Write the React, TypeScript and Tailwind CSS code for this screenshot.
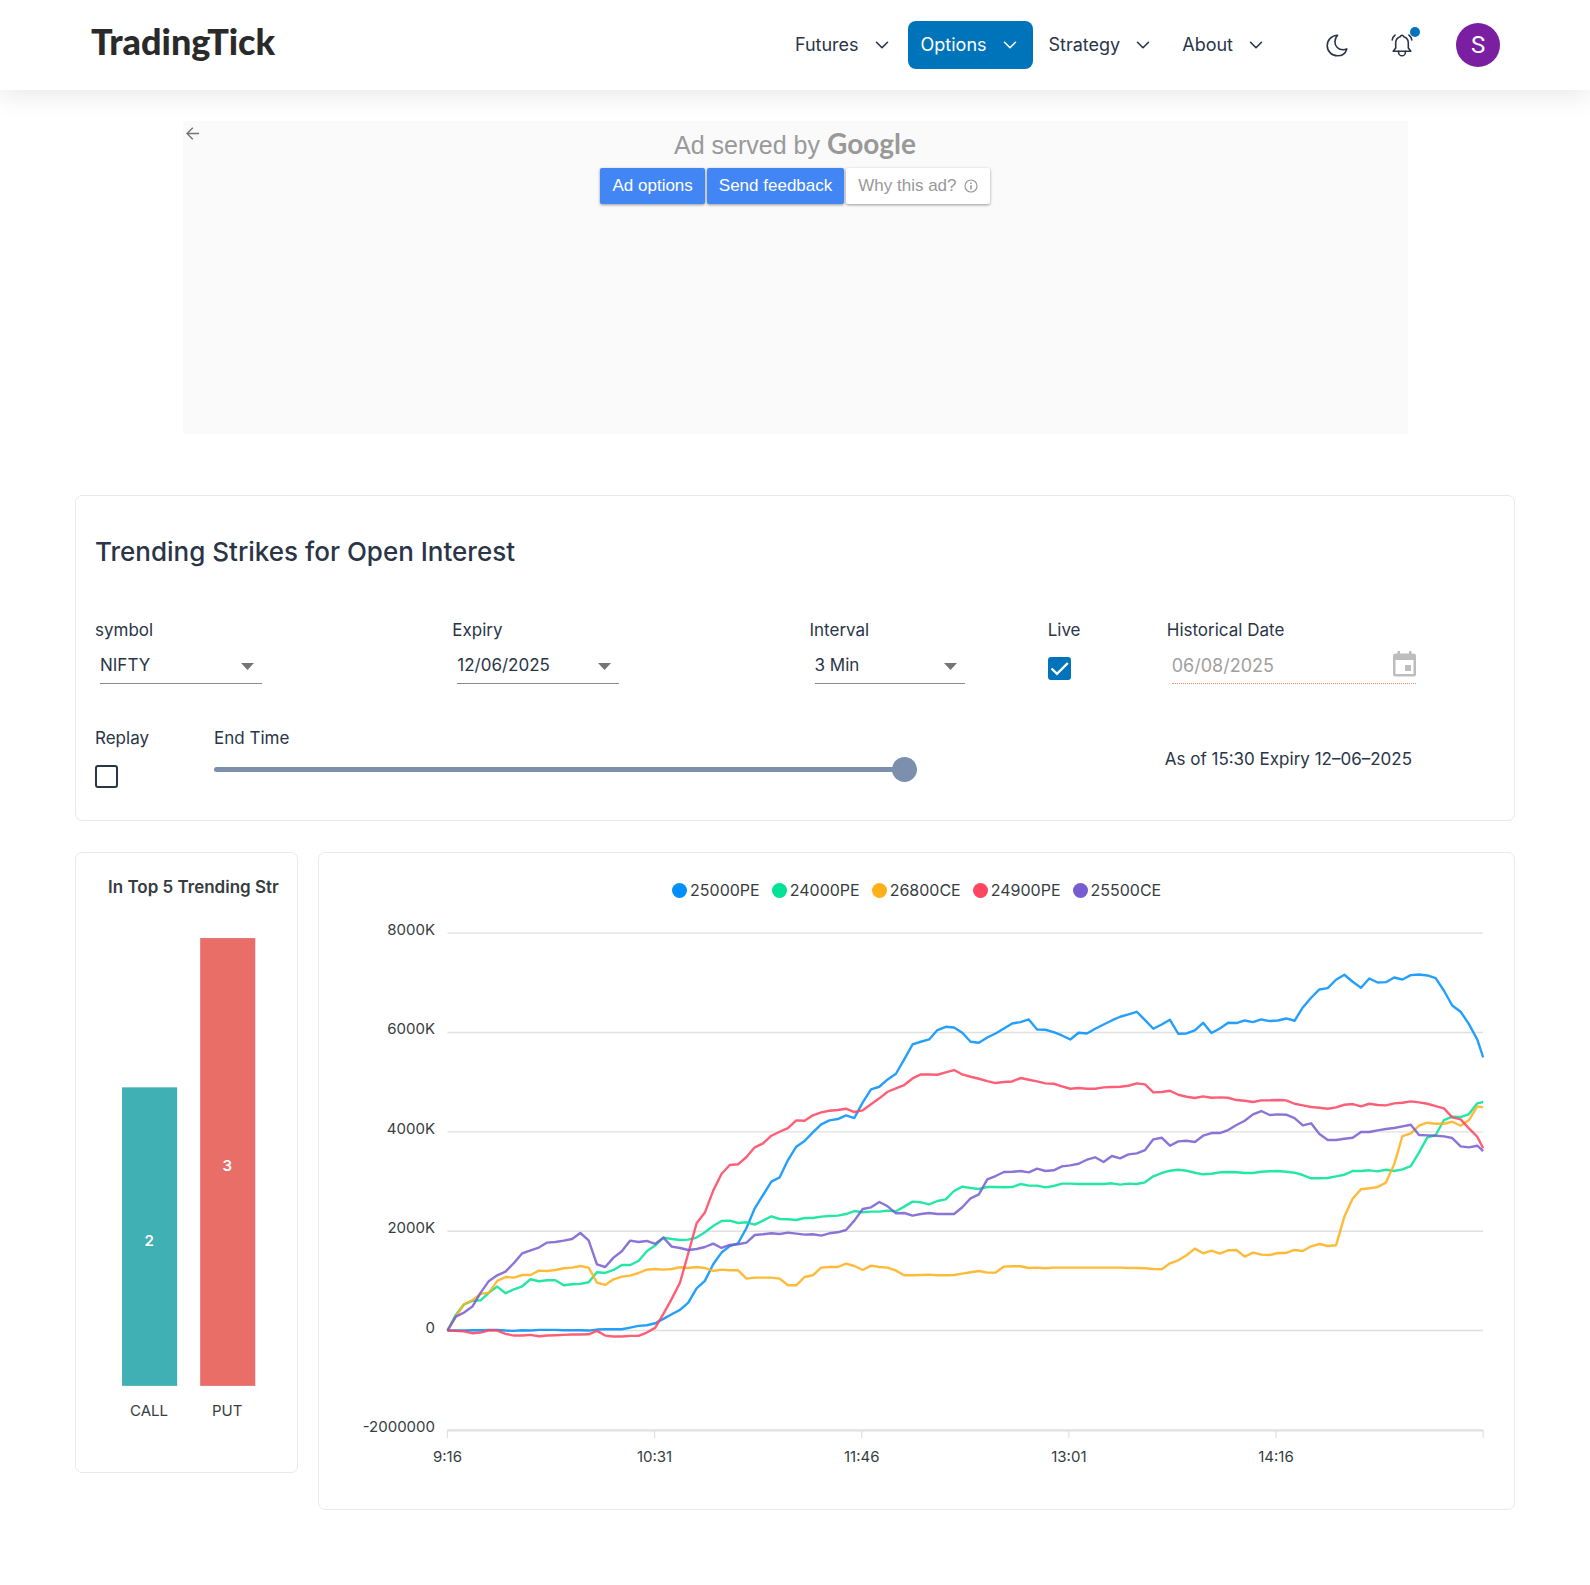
import { useState } from "react";
import type { ReactNode } from "react";
import { ChevronDown } from "lucide-react";

/* ---------- Data ---------- */

type Series = { name: string; color: string; dot: string; points: number[] };

// One point per three minutes from 9:16; one unit is 2,000K / 298.3 contracts.
const UNITS_PER_2000K = 298.3;

const series: Series[] = [
  {
    name: "25000PE",
    color: "#008ffb",
    dot: "bg-[#008ffb]",
    points: [
      0, 0, 0, 1, 1, 2, 2, 0, -1, 1, 0, 2, 2, 2, 1, 1, 1, 0, 3, 4, 4, 4, 9, 14, 16, 22, 35, 49, 62, 84, 127, 149,
      199, 234, 254, 262, 308, 367, 407, 447, 460, 512, 552, 569, 595, 619, 631, 635, 646, 638, 685, 724, 732, 754,
      771, 814, 859, 867, 874, 902, 912, 910, 894, 867, 864, 880, 892, 907, 922, 926, 934, 904, 903, 896, 886, 874,
      894, 892, 906, 919, 931, 942, 949, 957, 932, 906, 919, 933, 891, 892, 901, 924, 893, 907, 924, 923, 931, 926,
      934, 929, 931, 937, 930, 970, 999, 1024, 1028, 1053, 1068, 1047, 1029, 1057, 1045, 1046, 1060, 1054, 1067,
      1069, 1066, 1058, 1020, 976, 957, 920, 874, 820,
    ],
  },
  {
    name: "24000PE",
    color: "#00e396",
    dot: "bg-[#00e396]",
    points: [
      0, 47, 79, 89, 91, 114, 132, 112, 124, 133, 154, 148, 151, 151, 136, 139, 140, 145, 175, 173, 182, 197, 197,
      209, 238, 255, 279, 275, 272, 273, 279, 295, 314, 329, 330, 323, 325, 318, 330, 343, 335, 334, 332, 338, 338,
      342, 344, 345, 350, 359, 355, 357, 357, 360, 358, 372, 387, 385, 379, 389, 394, 419, 432, 428, 425, 431, 431,
      430, 431, 440, 435, 435, 430, 434, 441, 441, 440, 440, 440, 440, 442, 438, 441, 440, 445, 463, 473, 480, 483,
      480, 474, 469, 471, 475, 476, 475, 473, 473, 477, 478, 479, 477, 474, 467, 457, 457, 458, 463, 468, 479, 479,
      481, 478, 483, 479, 484, 494, 535, 580, 587, 632, 642, 641, 650, 682, 686,
    ],
  },
  {
    name: "26800CE",
    color: "#feb019",
    dot: "bg-[#feb019]",
    points: [
      0, 42, 79, 91, 110, 114, 149, 161, 159, 167, 167, 180, 179, 182, 187, 189, 194, 189, 144, 137, 154, 162, 165,
      173, 183, 185, 183, 185, 190, 188, 191, 188, 179, 183, 181, 181, 156, 159, 159, 159, 156, 136, 136, 161, 166,
      189, 191, 191, 201, 194, 182, 195, 191, 189, 180, 166, 166, 167, 168, 166, 166, 167, 171, 175, 179, 174, 174,
      192, 193, 193, 188, 189, 187, 189, 189, 189, 189, 189, 189, 189, 189, 189, 188, 188, 187, 185, 184, 202, 211,
      226, 246, 232, 240, 231, 241, 242, 222, 234, 228, 227, 233, 233, 242, 239, 253, 260, 254, 256, 342, 396, 424,
      427, 431, 444, 499, 584, 592, 615, 624, 621, 621, 627, 615, 632, 673, 670,
    ],
  },
  {
    name: "24900PE",
    color: "#ff4560",
    dot: "bg-[#ff4560]",
    points: [
      0, -1, -2, -8, -6, 1, 0, -10, -15, -15, -13, -17, -15, -14, -13, -12, -12, -11, -1, -15, -18, -18, -16, -16,
      -6, 8, 50, 95, 144, 232, 322, 354, 420, 470, 497, 499, 521, 550, 562, 585, 597, 608, 631, 630, 646, 655, 660,
      662, 666, 656, 661, 679, 697, 717, 727, 737, 757, 769, 769, 768, 775, 782, 769, 762, 756, 749, 743, 746, 748,
      758, 753, 748, 742, 741, 733, 726, 728, 726, 726, 730, 731, 732, 735, 742, 739, 715, 716, 720, 708, 702, 698,
      703, 699, 700, 699, 692, 690, 686, 691, 691, 692, 691, 681, 676, 671, 669, 666, 670, 678, 680, 673, 681, 677,
      676, 682, 684, 688, 685, 681, 674, 667, 640, 634, 607, 582, 547,
    ],
  },
  {
    name: "25500CE",
    color: "#775dd0",
    dot: "bg-[#775dd0]",
    points: [
      0, 42, 54, 72, 114, 149, 166, 177, 203, 232, 241, 249, 264, 266, 270, 275, 293, 271, 199, 191, 219, 238, 270,
      266, 269, 260, 279, 252, 248, 242, 245, 251, 261, 248, 257, 259, 264, 287, 289, 292, 290, 294, 291, 288, 289,
      285, 292, 295, 302, 330, 365, 370, 386, 373, 352, 353, 345, 350, 353, 350, 350, 350, 370, 397, 409, 454, 464,
      476, 477, 479, 475, 486, 479, 481, 493, 496, 501, 513, 520, 506, 524, 517, 529, 532, 542, 574, 579, 555, 568,
      570, 566, 585, 593, 593, 602, 617, 630, 649, 659, 647, 649, 648, 638, 616, 622, 590, 572, 572, 576, 579, 596,
      596, 601, 605, 608, 613, 618, 587, 586, 585, 583, 578, 553, 550, 555, 539,
    ],
  },
];

/* ---------- Header ---------- */

function NavItem({ label, active = false }: { label: string; active?: boolean }) {
  return (
    <button
      type="button"
      className={
        active
          ? "flex h-12 items-center gap-3 rounded-lg bg-[#0074ba] pr-3 pl-[13px] text-lg text-white"
          : "flex h-12 items-center gap-3 rounded-lg pr-3 pl-[13px] text-lg text-[#2a3547]"
      }
    >
      {label}
      <ChevronDown size={22} strokeWidth={1.75} />
    </button>
  );
}

function MoonIcon() {
  return (
    <svg width="22" height="23" viewBox="0 0 22 23" fill="none" stroke="#2a3547" strokeWidth="1.6" strokeLinejoin="round">
      <path d="M11.6 1.2C5.6 1.5 1.2 6 1.2 11.7a10.2 10.2 0 0 0 10.3 10.1c4.5 0 8-2.5 9.3-6.9-1.3.7-2.5.9-3.8.9-4.6 0-8.1-3.5-8.1-8 0-2.6 1-4.9 2.7-6.6z" />
    </svg>
  );
}

function BellIcon() {
  return (
    <svg width="22" height="23" viewBox="0 0 22 23" fill="none" stroke="#2a3547" strokeWidth="1.6" strokeLinecap="round" strokeLinejoin="round">
      <path d="M11 1.300c1 0 1.500.6 1.700 1.400 2.700.9 4.600 3 4.600 6v5.300l2.500 3.200H2.200l2.500-3.200V8.700c0-3 1.900-5.100 4.600-6 .2-.8.7-1.400 1.700-1.400z" />
      <path d="M7.600 17.400v1a3.400 3.400 0 0 0 6.800 0v-1" />
      <path d="M1.200 6c.2-2 1.200-3.700 2.800-4.900M20.800 6c-.2-2-1.200-3.700-2.800-4.900" />
    </svg>
  );
}

function Header() {
  return (
    <header className="relative bg-white shadow-[0_6px_26px_rgba(0,0,0,0.09)]">
      <div className="mx-auto flex h-[90px] max-w-[1440px] items-center pr-[15px] pl-4">
        <a href="#" className="mb-2 font-['Lato',sans-serif] text-4xl leading-10 font-black text-[#2a2a2a]">
          TradingTick
        </a>
        <nav className="ml-auto flex items-center gap-[3px]">
          <NavItem label="Futures" />
          <NavItem label="Options" active />
          <NavItem label="Strategy" />
          <NavItem label="About" />
        </nav>
        <div className="ml-[47px] flex items-center gap-[43px]">
          <button type="button" aria-label="Dark mode">
            <MoonIcon />
          </button>
          <button type="button" aria-label="Notifications" className="relative">
            <BellIcon />
            <span className="absolute -top-[7px] left-[19px] size-[10px] rounded-full bg-[#0074ba]" />
          </button>
          <button
            type="button"
            aria-label="Account"
            className="flex size-11 items-center justify-center rounded-full bg-[#7b1fa2] font-['Roboto',sans-serif] text-2xl text-white"
          >
            S
          </button>
        </div>
      </div>
    </header>
  );
}

/* ---------- Ad ---------- */

function AdSlot() {
  return (
    <aside className="relative mx-auto mt-[31px] h-[313px] max-w-[1225px] bg-[#fafafa] font-['Liberation_Sans',Arial,sans-serif]">
      <button type="button" aria-label="Back" className="absolute top-[6px] left-[3px]">
        <svg width="13" height="13" viewBox="0 0 13 13" fill="none" stroke="#757575" strokeWidth="1.5">
          <path d="M13 6.500H1.200M6.800 .7L1 6.500l5.800 5.800" />
        </svg>
      </button>
      <p className="flex items-baseline justify-center gap-[7px] pt-[6px] text-[25px] leading-8 text-[#999999]">
        Ad served by
        <span className="font-['Lato',sans-serif] text-[28px] leading-8 font-bold">Google</span>
      </p>
      <div className="mt-[7px] flex justify-center gap-[2px] text-[17px]">
        <button type="button" className="h-9 rounded-xs bg-[#4285f4] px-3 text-white shadow-[0_1px_3px_rgba(0,0,0,0.4)]">
          Ad options
        </button>
        <button type="button" className="h-9 rounded-xs bg-[#4285f4] px-3 text-white shadow-[0_1px_3px_rgba(0,0,0,0.4)]">
          Send feedback
        </button>
        <button
          type="button"
          className="flex h-9 items-center gap-[7px] rounded-xs bg-white px-3 text-[#999999] shadow-[0_1px_3px_rgba(0,0,0,0.4)]"
        >
          Why this ad?
          <svg width="14" height="14" viewBox="0 0 14 14" fill="none" stroke="#999999" strokeWidth="1.2">
            <circle cx="7" cy="7" r="6" />
            <path d="M7 6.200v4.300M7 3.500v1.500" strokeWidth="1.6" />
          </svg>
        </button>
      </div>
    </aside>
  );
}

/* ---------- Filters ---------- */

const labelClass = "block w-max text-[17px] leading-6 whitespace-nowrap";

function SelectField({ id, label, value, width }: { id: string; label: string; value: string; width: string }) {
  return (
    <>
      <label htmlFor={id} className={labelClass}>
        {label}
      </label>
      <div className={`relative mt-[6px] ml-[5px] ${width}`}>
        <select
          id={id}
          defaultValue={value}
          className="h-9 w-full appearance-none border-b border-[#8c8c8c] bg-transparent text-[17px] outline-none"
        >
          <option>{value}</option>
        </select>
        <svg
          width="13"
          height="7"
          viewBox="0 0 13 7"
          className="pointer-events-none absolute top-[15px] right-[8px] fill-[#757575]"
        >
          <path d="M0 0h13L6.500 7z" />
        </svg>
      </div>
    </>
  );
}

function CheckField({ id, label, initial }: { id: string; label: string; initial: boolean }) {
  const [checked, setChecked] = useState(initial);
  return (
    <>
      <label htmlFor={id} className={labelClass}>
        {label}
      </label>
      <div className="relative mt-[15px] size-[23px]">
        <input
          id={id}
          type="checkbox"
          checked={checked}
          onChange={(e) => setChecked(e.target.checked)}
          className="block size-[23px] appearance-none rounded-[3px] border-2 border-[#2a3547] checked:border-[#0074ba] checked:bg-[#0074ba]"
        />
        {checked && (
          <svg
            width="23"
            height="23"
            viewBox="0 0 23 23"
            fill="none"
            stroke="white"
            strokeWidth="2.4"
            className="pointer-events-none absolute inset-0"
          >
            <path d="M3.500 11.500l5.500 5.300L19.800 6" />
          </svg>
        )}
      </div>
    </>
  );
}

function Filters() {
  return (
    <Card className="mt-[61px] pt-9 pr-5 pb-8 pl-[19px]">
      <h1 className="text-[26px] leading-10 font-medium">Trending Strikes for Open Interest</h1>
      <form className="mt-[46px] grid grid-cols-12 gap-x-[30px] gap-y-[42px]">
        <div className="col-span-3">
          <SelectField id="symbol" label="symbol" value="NIFTY" width="w-[162px]" />
        </div>
        <div className="col-span-3">
          <SelectField id="expiry" label="Expiry" value="12/06/2025" width="w-[162px]" />
        </div>
        <div className="col-span-2">
          <SelectField id="interval" label="Interval" value="3 Min" width="w-[150px]" />
        </div>
        <div className="col-span-1">
          <CheckField id="live" label="Live" initial />
        </div>
        <div className="col-span-3">
          <label htmlFor="history" className={labelClass}>
            Historical Date
          </label>
          <div className="relative mt-[6px] ml-[5px] w-[244px]">
            <input
              id="history"
              type="text"
              disabled
              defaultValue="06/08/2025"
              className="h-9 w-full border-b border-dotted border-[#fa896b] bg-transparent text-lg text-[#a0a0a0]"
            />
            <button type="button" disabled aria-label="Choose date" className="absolute top-[3px] right-0">
              <svg width="23" height="26" viewBox="0 0 23 26" fill="#bdbdbd">
                <path
                  fillRule="evenodd"
                  d="M4.500 0H7v2.500h9V0h2.500v2.500h2A2.500 2.500 0 0 1 23 5v18a2.500 2.500 0 0 1-2.500 2.500h-18A2.500 2.500 0 0 1 0 23V5a2.500 2.500 0 0 1 2.500-2.500h2zM2.500 9v14h18V9z"
                />
                <path d="M12 14h6v6h-6z" />
              </svg>
            </button>
          </div>
        </div>

        <div className="col-span-1">
          <CheckField id="replay" label="Replay" initial={false} />
        </div>
        <div className="col-span-6 -mr-[18px]">
          <label htmlFor="end-time" className={labelClass}>
            End Time
          </label>
          <input
            id="end-time"
            type="range"
            min={0}
            max={125}
            defaultValue={125}
            className="mt-[7px] block h-[25px] w-full appearance-none bg-transparent [&::-webkit-slider-runnable-track]:h-[5px] [&::-webkit-slider-runnable-track]:rounded-full [&::-webkit-slider-runnable-track]:bg-[#7c8fac] [&::-webkit-slider-thumb]:-mt-[10px] [&::-webkit-slider-thumb]:size-[25px] [&::-webkit-slider-thumb]:appearance-none [&::-webkit-slider-thumb]:rounded-full [&::-webkit-slider-thumb]:bg-[#7c8fac]"
          />
        </div>
        <p className="col-span-5 mt-[21px] pr-[82px] text-right text-[17px] leading-6">As of 15:30 Expiry 12–06–2025</p>
      </form>
    </Card>
  );
}

/* ---------- Charts ---------- */

function Card({ className, children }: { className: string; children: ReactNode }) {
  return <section className={`rounded-[7px] border border-[#e5eaef] bg-white ${className}`}>{children}</section>;
}

const bars = [
  { name: "CALL", value: 2, x: 27, color: "#41b0b4" },
  { name: "PUT", value: 3, x: 105, color: "#e86e67" },
];

function StrikeCountChart() {
  const unit = 149;
  const base = 486;
  return (
    <Card className="col-span-2 px-[19px] pt-[22px] pb-[23px]">
      <h2 className="pl-[13px] text-[17px] leading-6 font-semibold whitespace-nowrap text-[#373d3f]">
        In Top 5 Trending Str
      </h2>
      <svg viewBox="0 0 183 549" className="block w-full">
        {bars.map((b) => (
          <g key={b.name} textAnchor="middle" fontFamily="Inter, sans-serif">
            <rect x={b.x} y={base - b.value * unit} width="55" height={b.value * unit} fill={b.color} />
            <text x={b.x + 27} y={base + 9 - (b.value * unit) / 2} fontSize="15" fontWeight="600" fill="#fff">
              {b.value}
            </text>
            <text x={b.x + 27} y={base + 30} fontSize="15" fill="#373d3f">
              {b.name}
            </text>
          </g>
        ))}
      </svg>
    </Card>
  );
}

const PLOT = { left: 128.5, right: 1164.5, zero: 427.7, per2000K: 99.4 };
const STEP = 8.307;

const yTicks = [
  { label: "8000K", n: 4 },
  { label: "6000K", n: 3 },
  { label: "4000K", n: 2 },
  { label: "2000K", n: 1 },
  { label: "0", n: 0 },
];
const xTicks = ["9:16", "10:31", "11:46", "13:01", "14:16", ""];

function linePath(points: number[]) {
  return points
    .map((v, i) => {
      const x = Math.min(PLOT.left + i * STEP, PLOT.right);
      const y = PLOT.zero - (v / UNITS_PER_2000K) * PLOT.per2000K;
      return `${i === 0 ? "M" : "L"}${x.toFixed(1)} ${y.toFixed(1)}`;
    })
    .join("");
}

function OpenInterestChart() {
  const bottom = PLOT.zero + PLOT.per2000K;
  return (
    <Card className="col-span-10">
      <ul className="mt-6 flex justify-center gap-3 text-base leading-[26px] text-[#373d3f]">
        {series.map((s) => (
          <li key={s.name} className="flex items-center gap-[3px]">
            <span className={`size-[15px] rounded-full ${s.dot}`} />
            {s.name}
          </li>
        ))}
      </ul>
      <svg viewBox="0 0 1195 606" className="block w-full" fontFamily="Inter, sans-serif" fontSize="15" fill="#373d3f">
        {yTicks.map((t) => (
          <g key={t.label}>
            <path
              d={`M${PLOT.left} ${PLOT.zero - t.n * PLOT.per2000K}H${PLOT.right}`}
              stroke="#e0e0e0"
              strokeWidth="1.4"
            />
            <text x="116" y={PLOT.zero - t.n * PLOT.per2000K + 2} textAnchor="end">
              {t.label}
            </text>
          </g>
        ))}
        <text x="116" y={bottom + 2} textAnchor="end">
          -2000000
        </text>
        <path d={`M${PLOT.left} ${bottom + 0.5}H${PLOT.right}`} stroke="#e0e0e0" strokeWidth="2.2" />
        {xTicks.map((t, i) => {
          const x = PLOT.left + i * 207.2;
          return (
            <g key={t}>
              <path d={`M${x} ${bottom}v8`} stroke="#e0e0e0" strokeWidth="1.2" />
              <text x={x} y={bottom + 32} textAnchor="middle">
                {t}
              </text>
            </g>
          );
        })}
        {series.map((s) => (
          <path
            key={s.name}
            d={linePath(s.points)}
            fill="none"
            stroke={s.color}
            strokeOpacity="0.86"
            strokeWidth="2.4"
            strokeLinejoin="round"
          />
        ))}
      </svg>
    </Card>
  );
}

export default function App() {
  return (
    <div className="min-h-screen bg-white pb-[74px] font-['Inter',sans-serif] text-[#2a3547]">
      <Header />
      <main className="mx-auto max-w-[1440px]">
        <AdSlot />
        <Filters />
        <div className="mt-[31px] grid grid-cols-12 items-start gap-5">
          <StrikeCountChart />
          <OpenInterestChart />
        </div>
      </main>
    </div>
  );
}
